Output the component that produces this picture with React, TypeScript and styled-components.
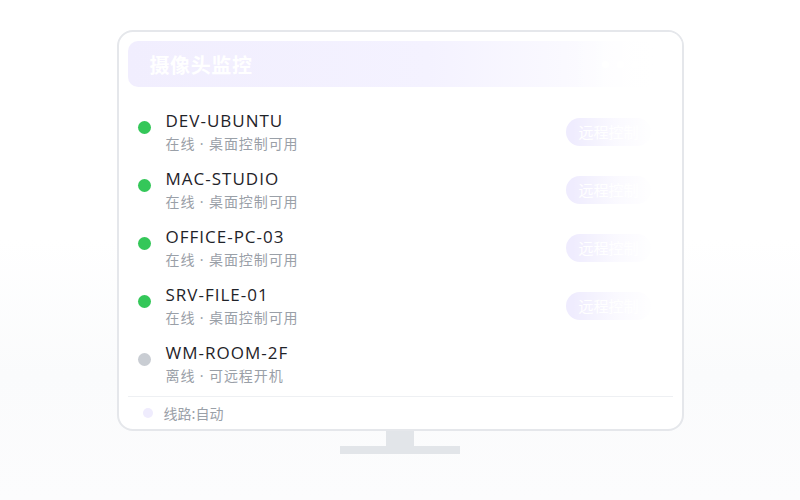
import React from 'react';
import styled, { createGlobalStyle } from 'styled-components';

const GlobalStyle = createGlobalStyle`
  html, body {
    margin: 0;
    padding: 0;
  }
  body {
    font-family: "Noto Sans", "Noto Sans CJK SC", sans-serif;
  }
`;

const Page = styled.div`
  width: 800px;
  height: 500px;
  box-sizing: border-box;
  padding-top: 30px;
  display: flex;
  flex-direction: column;
  align-items: center;
  background: linear-gradient(to bottom, #ffffff 0%, #ffffff 48%, #fafbfc 75%, #fcfcfd 100%);
`;

const Monitor = styled.div`
  display: flex;
  flex-direction: column;
  align-items: center;
`;

const Frame = styled.div`
  position: relative;
  width: 567px;
  height: 401px;
  box-sizing: border-box;
  border: 2px solid #e5e7eb;
  border-radius: 16px;
  background: #ffffff;
  padding: 9px 9px 0;
  display: flex;
  flex-direction: column;
  overflow: hidden;
`;

const Header = styled.div`
  height: 46px;
  border-radius: 10px;
  background: linear-gradient(to right, #f1eefe 0%, #f4f2ff 55%, #faf9ff 80%, rgba(255, 255, 255, 0) 100%);
  display: flex;
  align-items: center;
  justify-content: space-between;
  padding: 0 18px 0 22px;
`;

const Title = styled.div`
  color: #ffffff;
  font-size: 20px;
  letter-spacing: 0.6px;
  font-weight: 700;
  font-family: "Noto Sans CJK SC", sans-serif;
`;

const Dots = styled.div`
  display: flex;
  gap: 8px;
  margin-right: 16px;
`;

const Dot = styled.span`
  width: 7px;
  height: 7px;
  border-radius: 50%;
  background: #ffffff;
`;

const List = styled.div`
  display: flex;
  flex-direction: column;
  gap: 14px;
  padding-top: 23px;
`;

const Row = styled.div`
  display: flex;
  align-items: flex-start;
  padding-left: 10px;
  height: 44px;
`;

const Status = styled.span<{ $online: boolean }>`
  width: 13px;
  height: 13px;
  border-radius: 50%;
  margin-top: 11px;
  flex-shrink: 0;
  background: ${(p) => (p.$online ? '#34c759' : '#c9cdd3')};
`;

const Info = styled.div`
  margin-left: 15px;
  flex: 1;
  display: flex;
  flex-direction: column;
`;

const Name = styled.div`
  font-family: "Open Sans", "Noto Sans", sans-serif;
  font-size: 17px;
  line-height: 22px;
  color: #1f2329;
  letter-spacing: 1px;
`;

const Sub = styled.div`
  margin-top: 2px;
  font-size: 14px;
  line-height: 20px;
  color: #9aa0a8;
  font-family: "Noto Sans", "Noto Sans CJK SC", sans-serif;
  letter-spacing: 0.9px;
`;

const RemoteButton = styled.div`
  align-self: center;
  margin-right: 22px;
  height: 28px;
  padding: 0 12px;
  border-radius: 14px;
  background: #efecfe;
  color: #ffffff;
  font-size: 15px;
  line-height: 28px;
  font-family: "Noto Sans CJK SC", serif;
`;

const Divider = styled.div`
  height: 1px;
  background: #eef0f3;
  margin-top: 10px;
`;

const Footer = styled.div`
  height: 32px;
  display: flex;
  align-items: center;
  gap: 11px;
  padding-left: 15px;
`;

const RouteDot = styled.span`
  width: 10px;
  height: 10px;
  border-radius: 50%;
  background: #efecfd;
`;

const RouteText = styled.span`
  font-size: 14px;
  color: #9aa0a8;
  font-family: "Noto Sans CJK SC", sans-serif;
`;

const Fade = styled.div`
  position: absolute;
  top: 0;
  right: 0;
  bottom: 40px;
  width: 110px;
  background: linear-gradient(to right, rgba(255, 255, 255, 0) 0%, rgba(255, 255, 255, 0.7) 40%, #ffffff 75%);
  pointer-events: none;
`;

const Neck = styled.div`
  width: 28px;
  height: 15px;
  background: #e2e5e9;
`;

const Base = styled.div`
  width: 120px;
  height: 8px;
  background: #e2e5e9;
`;

const devices = [
  { name: 'DEV-UBUNTU', sub: '在线 · 桌面控制可用', online: true },
  { name: 'MAC-STUDIO', sub: '在线 · 桌面控制可用', online: true },
  { name: 'OFFICE-PC-03', sub: '在线 · 桌面控制可用', online: true },
  { name: 'SRV-FILE-01', sub: '在线 · 桌面控制可用', online: true },
  { name: 'WM-ROOM-2F', sub: '离线 · 可远程开机', online: false },
];

const App = () => {
  return (
    <Page>
      <GlobalStyle />
      <Monitor>
        <Frame>
          <Header>
            <Title>摄像头监控</Title>
            <Dots>
              <Dot />
              <Dot />
              <Dot />
            </Dots>
          </Header>
          <List>
            {devices.map((d) => (
              <Row key={d.name}>
                <Status $online={d.online} />
                <Info>
                  <Name>{d.name}</Name>
                  <Sub>{d.sub}</Sub>
                </Info>
                {d.online && <RemoteButton>远程控制</RemoteButton>}
              </Row>
            ))}
          </List>
          <Divider />
          <Footer>
            <RouteDot />
            <RouteText>线路:自动</RouteText>
          </Footer>
          <Fade />
        </Frame>
        <Neck />
        <Base />
      </Monitor>
    </Page>
  );
};

export default App;
